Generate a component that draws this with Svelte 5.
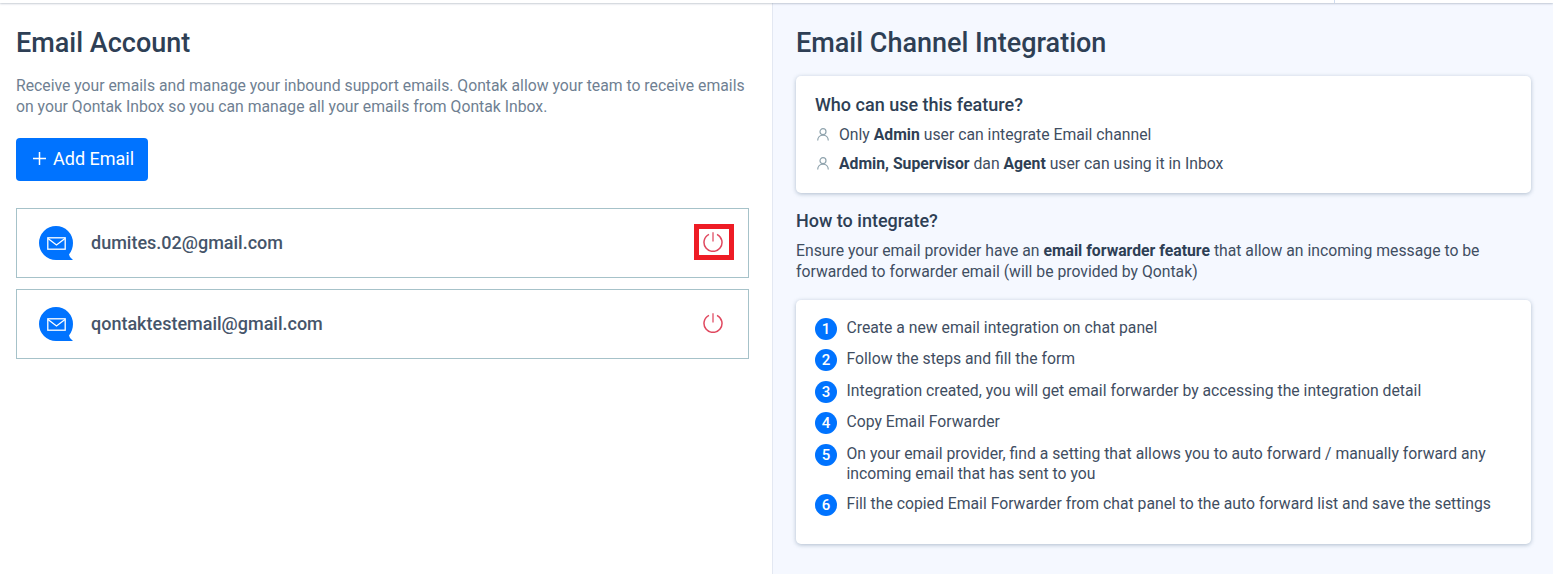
<script>
	const accounts = [
		{ email: 'dumites.02@gmail.com', marked: true },
		{ email: 'qontaktestemail@gmail.com', marked: false }
	];

	const steps = [
		'Create a new email integration on chat panel',
		'Follow the steps and fill the form',
		'Integration created, you will get email forwarder by accessing the integration detail',
		'Copy Email Forwarder',
		'On your email provider, find a setting that allows you to auto forward / manually forward any incoming email that has sent to you',
		'Fill the copied Email Forwarder from chat panel to the auto forward list and save the settings'
	];
</script>

<div class="topbar"><span class="divider"></span></div>

<main>
	<section class="left">
		<h1>Email Account</h1>
		<p class="intro">
			Receive your emails and manage your inbound support emails. Qontak allow your team to receive emails on your Qontak Inbox so you can manage all your emails from Qontak Inbox.
		</p>
		<button class="add">
			<svg width="13" height="13" viewBox="0 0 13 13"><path d="M6.500 0v13M0 6.500h13" stroke="#fff" stroke-width="1.500" fill="none" /></svg>
			Add Email
		</button>

		<div class="accounts">
			{#each accounts as account}
				<div class="account">
					<svg class="bubble" width="35" height="35" viewBox="0 0 35 35">
						<path d="M17 0a17 17 0 0 1 17 17c0 4.500-1.500 8.500-4 11.500l1 2.500 3 3H17a17 17 0 0 1 0-34z" fill="#0073ff" />
						<rect x="8.800" y="11.800" width="17.400" height="11.400" fill="none" stroke="#fff" stroke-width="1.300" />
						<path d="M9 12.500l8.500 6.500 8.500-6.500" fill="none" stroke="#fff" stroke-width="1.300" />
					</svg>
					<span class="email">{account.email}</span>
					<span class="power" class:marked={account.marked}>
						<svg width="20" height="20" viewBox="0 0 20 20" fill="none" stroke="#e0485f" stroke-width="1.500">
							<path d="M6 2.300a9 9 0 1 0 8 0" />
							<path d="M10 .2v9.300" stroke="#e8788a" stroke-width="1.700" />
						</svg>
					</span>
				</div>
			{/each}
		</div>
	</section>

	<section class="right">
		<h1>Email Channel Integration</h1>

		<div class="card who">
			<h2>Who can use this feature?</h2>
			<div class="who-row">
				<svg class="person" width="12" height="13" viewBox="0 0 12 13" fill="none" stroke="#8fa3ad" stroke-width="1.200">
					<circle cx="6" cy="3.700" r="3" />
					<path d="M.7 12.500c0-3 2.200-5.300 5.300-5.300s5.300 2.300 5.300 5.300" />
				</svg>
				<span>Only <b>Admin</b> user can integrate Email channel</span>
			</div>
			<div class="who-row">
				<svg class="person" width="12" height="13" viewBox="0 0 12 13" fill="none" stroke="#8fa3ad" stroke-width="1.200">
					<circle cx="6" cy="3.700" r="3" />
					<path d="M.7 12.500c0-3 2.200-5.300 5.300-5.300s5.300 2.300 5.300 5.300" />
				</svg>
				<span><b>Admin, Supervisor</b> dan <b>Agent</b> user can using it in Inbox</span>
			</div>
		</div>

		<h3>How to integrate?</h3>
		<p class="ensure">
			Ensure your email provider have an <b>email forwarder feature</b> that allow an incoming message to be forwarded to forwarder email (will be provided by Qontak)
		</p>

		<div class="card how">
			{#each steps as step, i}
				<div class="step">
					<span class="num">{i + 1}</span>
					<span class="text">{step}</span>
				</div>
			{/each}
		</div>
	</section>
</main>

<style>
	:global(body) {
		margin: 0;
		background: #fff;
		font-family: Roboto, "Liberation Sans", sans-serif;
		color: #2e3f55;
	}
	.topbar {
		height: 3px;
		box-shadow: 0 1px 2px rgba(40, 60, 90, 0.25);
		position: relative;
		display: flex;
		justify-content: flex-end;
	}
	.divider {
		width: 1px;
		height: 3px;
		margin-right: 218px;
		background: #cfdcf0;
	}
	main {
		display: flex;
		height: 571px;
		overflow: hidden;
	}
	.left {
		width: 772px;
		box-sizing: border-box;
		padding: 0 23px 0 16px;
	}
	.right {
		flex: 1;
		background: #f5f8ff;
		border-left: 1px solid #e3e8f2;
		padding: 0 22px 0 23px;
	}
	h1 {
		font-size: 27px;
		font-weight: 500;
		line-height: 32px;
		margin: 24px 0 0;
		color: #2e3f55;
	}
	.intro {
		font-size: 15.75px;
		line-height: 21px;
		margin: 16px 0 0;
		color: #6f7f92;
	}
	.add {
		display: flex;
		align-items: center;
		gap: 7px;
		height: 43px;
		width: 132px;
		margin-top: 21px;
		padding: 0 0 2px 17px;
		border: none;
		border-radius: 4px;
		background: #0073ff;
		color: #fff;
		font: 400 18px Roboto, sans-serif;
	}
	.accounts {
		margin-top: 27px;
		display: flex;
		flex-direction: column;
		gap: 11px;
	}
	.account {
		display: flex;
		align-items: center;
		height: 70px;
		box-sizing: border-box;
		border: 1px solid #a6c2c9;
		padding: 0 25px 0 22px;
	}
	.bubble {
		margin-right: 17px;
		margin-top: 1px;
	}
	.email {
		flex: 1;
		font-size: 18px;
		font-weight: 500;
		color: #46556a;
		margin-top: -1px;
	}
	.power {
		display: flex;
		margin-top: -2px;
	}
	.power.marked {
		outline: 5px solid #ee1c25;
		padding: 3px 6px 3px 4px;
		margin: -2px -6px 0 -4px;
	}
	.card {
		background: #fff;
		border-radius: 5px;
		box-shadow: 0 1px 4px rgba(70, 100, 130, 0.4);
	}
	.who {
		box-sizing: border-box;
		height: 117px;
		margin-top: 17px;
		padding: 18px 19px;
	}
	h2 {
		font-size: 18px;
		font-weight: 500;
		line-height: 22px;
		margin: 0 0 4px;
		color: #2e3f55;
	}
	.who-row {
		display: flex;
		align-items: center;
		gap: 10px;
		height: 29px;
		padding-left: 2px;
		font-size: 15.75px;
		color: #3f4e62;
	}
	b {
		font-weight: 700;
		color: #2e3f55;
	}
	h3 {
		font-size: 18px;
		font-weight: 500;
		line-height: 20px;
		margin: 18px 0 0;
		color: #2e3f55;
	}
	.ensure {
		font-size: 15.75px;
		line-height: 20.5px;
		margin: 10px 0 0;
		color: #3f4e62;
	}
	.how {
		box-sizing: border-box;
		height: 244px;
		margin-top: 18px;
		padding: 18px 19px;
	}
	.step {
		display: flex;
		gap: 9.5px;
		font-size: 15.75px;
		line-height: 20.5px;
		margin-bottom: 9.4px;
		color: #3f4e62;
	}
	.num {
		flex: none;
		width: 22px;
		height: 22px;
		border-radius: 50%;
		background: #0073ff;
		color: #fff;
		font-size: 15px;
		font-weight: 500;
		line-height: 22px;
		text-align: center;
	}
	.text {
		width: 660px;
	}
</style>
